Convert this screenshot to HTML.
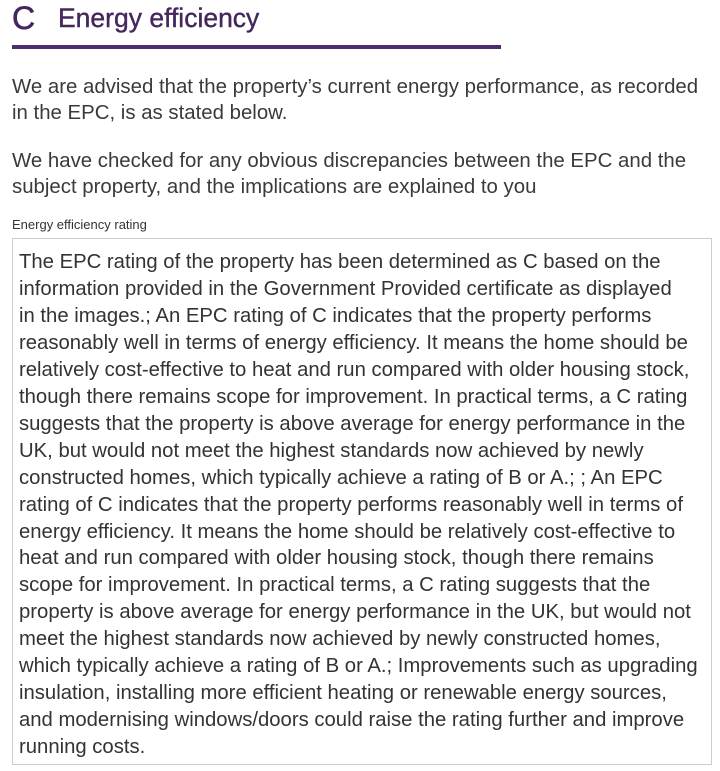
<!DOCTYPE html>
<html><head><meta charset="utf-8"><style>
body{margin:0;background:#fff;width:720px;height:771px;overflow:hidden;font-family:"Liberation Sans",sans-serif;color:#333;}
.h{position:absolute;left:12px;top:0;color:#45275f;white-space:nowrap}
.h .c{font-size:32px;position:absolute;left:0;top:0px;-webkit-text-stroke:0.6px #45275f}
.h .t{font-size:26.5px;position:absolute;left:46px;top:3px;-webkit-text-stroke:0.4px #45275f}
.rule{position:absolute;left:12px;top:45px;width:489px;height:4px;background:#4d2d6e}
.p{position:absolute;left:12px;font-size:20.4px;line-height:26px;white-space:nowrap;color:#3a3a3a}
.lab{position:absolute;left:12px;top:217px;font-size:13px;color:#333}
.box{position:absolute;left:12px;top:238px;width:700px;height:527px;border:1px solid #ccc;box-sizing:border-box}
.bt{position:absolute;left:19px;top:249px;font-size:20.3px;line-height:26.95px;white-space:nowrap;color:#333}
</style></head><body>
<div class="h"><span class="c">C</span><span class="t">Energy efficiency</span></div>
<div class="rule"></div>
<div class="p" style="top:74px">We are advised that the property’s current energy performance, as recorded<br>in the EPC, is as stated below.</div>
<div class="p" style="top:148px">We have checked for any obvious discrepancies between the EPC and the<br>subject property, and the implications are explained to you</div>
<div class="lab">Energy efficiency rating</div>
<div class="box"></div>
<div class="bt">The EPC rating of the property has been determined as C based on the<br>information provided in the Government Provided certificate as displayed<br>in the images.; An EPC rating of C indicates that the property performs<br>reasonably well in terms of energy efficiency. It means the home should be<br>relatively cost-effective to heat and run compared with older housing stock,<br>though there remains scope for improvement. In practical terms, a C rating<br>suggests that the property is above average for energy performance in the<br>UK, but would not meet the highest standards now achieved by newly<br>constructed homes, which typically achieve a rating of B or A.; ; An EPC<br>rating of C indicates that the property performs reasonably well in terms of<br>energy efficiency. It means the home should be relatively cost-effective to<br>heat and run compared with older housing stock, though there remains<br>scope for improvement. In practical terms, a C rating suggests that the<br>property is above average for energy performance in the UK, but would not<br>meet the highest standards now achieved by newly constructed homes,<br>which typically achieve a rating of B or A.; Improvements such as upgrading<br>insulation, installing more efficient heating or renewable energy sources,<br>and modernising windows/doors could raise the rating further and improve<br>running costs.</div>
</body></html>
